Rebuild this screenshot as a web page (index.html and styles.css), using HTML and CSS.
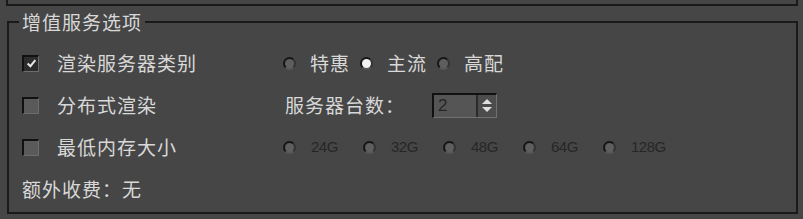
FILE: index.html
```html
<!DOCTYPE html>
<html lang="zh-CN">
<head>
    <meta charset="UTF-8">
    <title>增值服务选项</title>
    <link rel="stylesheet" href="styles.css">
</head>
<body>
    <div class="prev"></div>
    <fieldset class="group">
        <legend>增值服务选项</legend>
        <div class="rows">
            <div class="opt"><span class="check on"><svg viewBox="0 0 10 10" width="11" height="11"><polyline points="1.5,5 4,7.5 8.5,2" fill="none" stroke="#e8e8e8" stroke-width="1.8"/></svg></span>渲染服务器类别</div>
            <div class="choices">
                <span class="radio"></span><span class="lbl">特惠</span>
                <span class="radio on"></span><span class="lbl">主流</span>
                <span class="radio"></span><span class="lbl">高配</span>
            </div>

            <div class="opt"><span class="check"></span>分布式渲染</div>
            <div class="count">
                服务器台数：
                <span class="spin">
                    <span class="val">2</span>
                    <span class="arrows"><i class="up"></i><i class="down"></i></span>
                </span>
            </div>

            <div class="opt"><span class="check"></span>最低内存大小</div>
            <div class="mem">
                <span class="item"><span class="radio"></span>24G</span>
                <span class="item"><span class="radio"></span>32G</span>
                <span class="item"><span class="radio"></span>48G</span>
                <span class="item"><span class="radio"></span>64G</span>
                <span class="item"><span class="radio"></span>128G</span>
            </div>

            <div class="fee">额外收费：无</div>
        </div>
    </fieldset>
</body>
</html>
```

FILE: styles.css
```css
body {
    margin: 0;
    background-color: #464646;
    color: #d8d8d8;
    font-family: "Noto Sans CJK SC", "Liberation Sans", sans-serif;
    font-size: 19px;
    letter-spacing: 1px;
}

.prev {
    height: 4px;
    margin: 0 5px 0 6px;
    border: 2px solid #1a1a1a;
    border-top: none;
}

.group {
    margin: 6px 5px 0 7px;
    padding: 0;
    border: 2px solid #1a1a1a;
    min-width: 0;
}

.group legend {
    margin-left: 10px;
    padding: 0 3px;
    line-height: 20px;
}

.rows {
    display: grid;
    grid-template-columns: 261px 1fr;
    grid-auto-rows: 42px;
    align-items: center;
    padding: 10px 0 2px 13px;
}

.opt, .choices, .count, .mem, .fee {
    display: flex;
    align-items: center;
    line-height: 22px;
}

.check {
    width: 14px;
    height: 14px;
    margin-right: 18px;
    background-color: #5a5a5a;
    border-top: 2px solid #111;
    border-left: 2px solid #111;
    border-right: 1px solid #6c6c6c;
    border-bottom: 1px solid #6c6c6c;
    display: flex;
    align-items: center;
    justify-content: center;
}

.check.on {
    background-color: #2c2c2c;
}

.radio {
    width: 9px;
    height: 9px;
    border-radius: 50%;
    background-color: #5e5e5e;
    border: 2px solid #151515;
    border-right-color: #333;
    border-bottom-color: #575757;
    flex-shrink: 0;
}

.radio.on {
    background-color: #f2f2f2;
}

.choices .radio {
    margin-right: 14px;
}

.choices .lbl {
    margin-right: 10px;
}

.count {
    padding-left: 2px;
}

.spin {
    display: flex;
    margin-left: 27px;
    width: 62px;
    height: 22px;
    border-top: 2px solid #111;
    border-left: 2px solid #111;
    border-right: 1px solid #707070;
    border-bottom: 1px solid #707070;
    letter-spacing: 0;
}

.val {
    flex: 1;
    background-color: #555;
    color: #262626;
    font-family: "Liberation Sans", sans-serif;
    font-size: 17px;
    padding-left: 4px;
}

.arrows {
    width: 18px;
    display: flex;
    flex-direction: column;
    align-items: center;
    justify-content: center;
    gap: 3px;
    border-left: 2px solid #2a2a2a;
    background-color: #4c4c4c;
}

.arrows i {
    width: 0;
    height: 0;
    border-left: 5px solid transparent;
    border-right: 5px solid transparent;
}

.arrows .up {
    border-bottom: 5px solid #e0e0e0;
}

.arrows .down {
    border-top: 5px solid #e0e0e0;
}

.mem .item {
    width: 80px;
    display: flex;
    align-items: center;
    color: #262626;
    font-family: "Liberation Sans", sans-serif;
    font-size: 15px;
    letter-spacing: -0.5px;
}

.mem .radio {
    margin-right: 15px;
}

.fee {
    grid-column: 1 / 3;
}
```
